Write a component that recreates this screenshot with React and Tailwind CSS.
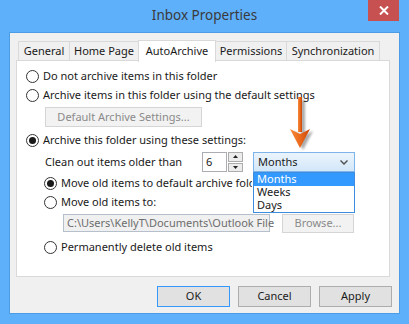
import React from 'react';

const Radio = ({ checked }) => (
    <span className="w-[13px] h-[13px] rounded-full border border-[#333] bg-white flex items-center justify-center shrink-0">
        {checked && <span className="w-[7px] h-[7px] rounded-full bg-[#1a1a1a]" />}
    </span>
);

const Option = ({ checked, label, className }) => (
    <div className={`flex items-center gap-[4px] whitespace-nowrap ${className}`}>
        <Radio checked={checked} />
        <span>{label}</span>
    </div>
);

const Tab = ({ label, active, w }) =>
    active ? (
        <div className={`${w} h-[22px] -ml-px bg-white border border-b-0 border-[#d9d9d9] flex justify-center pt-[2px] relative top-[1px] z-10 whitespace-nowrap`}>
            {label}
        </div>
    ) : (
        <div className={`${w} h-[19px] mt-[2px] bg-[#f0f0f0] border border-b-0 border-[#d9d9d9] -ml-px first:ml-0 flex items-center justify-center whitespace-nowrap`}>
            {label}
        </div>
    );

const Arrow = () => (
    <svg className="absolute left-[284px] top-[94px]" width="36" height="62" viewBox="0 0 36 62">
        <defs>
            <linearGradient id="org" x1="0" x2="1" y1="0" y2="0">
                <stop offset="0" stopColor="#f58a3c" />
                <stop offset="0.5" stopColor="#ec6a1c" />
                <stop offset="1" stopColor="#c9480a" />
            </linearGradient>
            <filter id="blur" x="-50%" y="-50%" width="200%" height="200%">
                <feGaussianBlur stdDeviation="1.3" />
            </filter>
        </defs>
        <g transform="translate(3 2)" opacity="0.45" filter="url(#blur)">
            <rect x="14" y="4" width="4" height="34" fill="#444" />
            <path d="M6 35 L16 40 L26 35 L16 54 Z" fill="#444" />
        </g>
        <rect x="14" y="3" width="4" height="35" fill="url(#org)" />
        <path d="M6 35 L16 40 L26 35 L16 54 Z" fill="url(#org)" />
    </svg>
);

const App = () => {
    return (
        <div className="w-[409px] h-[324px] bg-[#5fb0fb] relative text-[11px] text-[#1a1a1a] font-['Noto_Sans',sans-serif] overflow-hidden">
            <div className="h-[32px] flex items-center justify-center">
                <span className="text-[13.5px] text-[#3a3a3a] -mt-[2px]">Inbox Properties</span>
            </div>
            <div className="absolute right-[10px] top-0 w-[31px] h-[21px] bg-[#c75050] flex items-center justify-center">
                <svg width="10" height="9" viewBox="0 0 10 9">
                    <path d="M1 0.5 L9 8.5 M9 0.5 L1 8.5" stroke="#fff" strokeWidth="2" />
                </svg>
            </div>

            <div className="mx-[9px] w-[391px] h-[282px] bg-[#f0f0f0] border border-[#4c9ce6] px-[6px] pt-[6px] flex flex-col">
                <div className="flex ml-[2px] h-[21px]">
                    <Tab label="General" w="w-[52px]" />
                    <Tab label="Home Page" w="w-[70px]" />
                    <Tab label="AutoArchive" w="w-[78px]" active />
                    <Tab label="Permissions" w="w-[72px]" />
                    <Tab label="Synchronization" w="w-[94px]" />
                </div>

                <div className="w-[374px] h-[217px] bg-white border border-[#d9d9d9] flex flex-col relative">
                    <Option className="mt-[6px] h-[19px] ml-[9px]" label="Do not archive items in this folder" />
                    <Option className="h-[18px] ml-[9px]" label="Archive items in this folder using the default settings" />
                    <div className="mt-[3px] ml-[28px] w-[157px] h-[20px] border border-[#d5d5d5] bg-[#f2f2f2] text-[#8a8a8a] flex items-center justify-center">
                        Default Archive Settings...
                    </div>
                    <Option checked className="mt-[3px] h-[20px] ml-[9px]" label="Archive this folder using these settings:" />

                    <div className="mt-[2px] h-[20px] flex items-center">
                        <span className="ml-[28px] w-[157px]">Clean out items older than</span>
                        <div className="w-[25px] h-[20px] border border-[#abadb3] bg-white flex items-center pl-[3px]">6</div>
                        <div className="ml-px w-[15px] h-[20px] flex flex-col gap-px">
                            <div className="flex-1 border border-[#acacac] bg-[#ececec] flex items-center justify-center">
                                <svg width="5" height="3" viewBox="0 0 5 3"><path d="M0 3 L2.5 0 L5 3 Z" fill="#222" /></svg>
                            </div>
                            <div className="flex-1 border border-[#acacac] bg-[#ececec] flex items-center justify-center">
                                <svg width="5" height="3" viewBox="0 0 5 3"><path d="M0 0 L2.5 3 L5 0 Z" fill="#222" /></svg>
                            </div>
                        </div>
                        <div className="ml-[10px] w-[102px] h-[20px] border border-[#7eb4ea] bg-gradient-to-b from-[#ecf4fc] to-[#d2e7f9] flex items-center justify-between pl-[4px] pr-[6px] relative">
                            <span>Months</span>
                            <svg width="8" height="5" viewBox="0 0 8 5"><path d="M0.5 0.5 L4 4 L7.5 0.5" stroke="#555" strokeWidth="1.5" fill="none" /></svg>
                            <div className="absolute left-[-1px] top-[19px] w-[102px] border border-[#3c8ce0] bg-white flex flex-col z-20">
                                <div className="h-[13px] bg-[#3399ff] text-white flex items-center pl-[3px]">Months</div>
                                <div className="h-[13px] flex items-center pl-[3px]">Weeks</div>
                                <div className="h-[13px] flex items-center pl-[3px]">Days</div>
                            </div>
                        </div>
                    </div>

                    <div className="mt-[2px] h-[19px] ml-[27px] w-[208px] overflow-hidden">
                        <Option checked className="h-[19px]" label="Move old items to default archive folder" />
                    </div>
                    <Option className="h-[18px] ml-[27px]" label="Move old items to:" />
                    <div className="mt-[3px] h-[18px] flex">
                        <div className="ml-[46px] w-[207px] h-[18px] border border-[#b6c0cc] bg-[#f0f0f0] text-[#6d6d6d] pl-[3px] flex items-center whitespace-nowrap">
                            C:\Users\KellyT\Documents\Outlook File
                        </div>
                        <div className="ml-[12px] w-[72px] h-[19px] border border-[#d5d5d5] bg-[#f2f2f2] text-[#8a8a8a] flex items-center justify-center">
                            Browse...
                        </div>
                    </div>
                    <Option className="mt-[6px] h-[18px] ml-[27px]" label="Permanently delete old items" />
                </div>

                <div className="mt-[9px] flex justify-end gap-[8px] pr-[1px]">
                    <div className="w-[73px] h-[21px] border border-[#3399ff] bg-[#e1e1e1] flex items-center justify-center">OK</div>
                    <div className="w-[73px] h-[21px] border border-[#adadad] bg-[#e1e1e1] flex items-center justify-center">Cancel</div>
                    <div className="w-[73px] h-[21px] border border-[#adadad] bg-[#e1e1e1] flex items-center justify-center">Apply</div>
                </div>
            </div>

            <Arrow />
        </div>
    );
};

export default App;
